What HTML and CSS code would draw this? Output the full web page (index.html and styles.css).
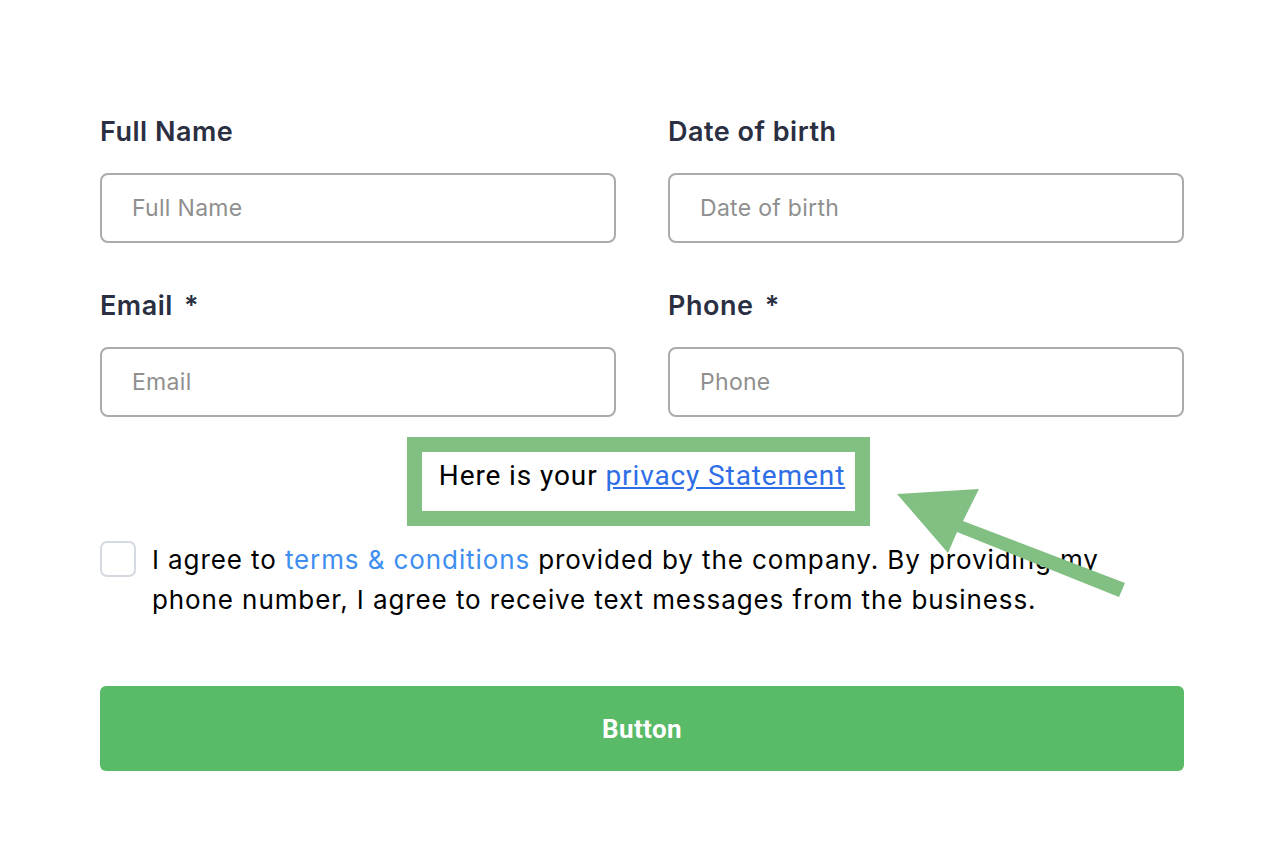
FILE: index.html
```html
<!DOCTYPE html>
<html lang="en">
<head>
  <meta charset="UTF-8">
  <meta name="viewport" content="width=device-width, initial-scale=1.0">
  <title>Contact Form</title>
  <link rel="stylesheet" href="styles.css">
</head>
<body>
  <div class="container">
    <form class="form" onsubmit="return false">
      <div class="grid">
        <div class="field">
          <label for="full-name">Full Name</label>
          <input type="text" id="full-name" placeholder="Full Name">
        </div>
        <div class="field">
          <label for="dob">Date of birth</label>
          <input type="text" id="dob" placeholder="Date of birth">
        </div>
        <div class="field">
          <label for="email">Email <span class="req">*</span></label>
          <input type="email" id="email" placeholder="Email">
        </div>
        <div class="field">
          <label for="phone">Phone <span class="req">*</span></label>
          <input type="tel" id="phone" placeholder="Phone">
        </div>
      </div>

      <!-- Privacy statement -->
      <div class="privacy-wrap">
        <div class="privacy">Here is your <a href="#">privacy Statement</a></div>
      </div>

      <!-- Terms -->
      <div class="agree">
        <span class="checkbox"></span>
        <p>I agree to <a href="#">terms &amp; conditions</a> provided by the company. By providing my phone number, I agree to receive text messages from the business.</p>
      </div>

      <button type="submit" class="submit">Button</button>
    </form>

    <svg class="arrow" width="1282" height="864" viewBox="0 0 1282 864">
      <polygon points="897,494 979,489 963,521 1125,583 1119,597 957,532 948,553" fill="#82bf82"/>
    </svg>
  </div>
</body>
</html>
```

FILE: styles.css
```css
body {
  margin: 0;
  font-family: Inter, "Noto Sans", sans-serif;
  background: #fff;
}
.container {
  position: relative;
  width: 1084px;
  padding: 116px 98px 0 100px;
}
.grid {
  display: grid;
  grid-template-columns: 516px 516px;
  column-gap: 52px;
}
.field {
  display: flex;
  flex-direction: column;
  margin-bottom: 47px;
}
.field:nth-child(n+3) {
  margin-bottom: 20px;
}
label {
  font-size: 27px;
  line-height: 32px;
  font-weight: 600;
  letter-spacing: 0.5px;
  color: #2b2f42;
  margin-bottom: 25px;
}
.req {
  margin-left: 4px;
}
input {
  box-sizing: border-box;
  height: 70px;
  width: 100%;
  border: 2px solid #ababab;
  border-radius: 8px;
  padding: 0 30px;
  font-family: Inter, sans-serif;
  font-size: 23px;
  letter-spacing: 0.3px;
  color: #333;
  outline: none;
}
input::placeholder {
  color: #8f8f8f;
}
.privacy-wrap {
  display: flex;
  justify-content: center;
  padding-right: 7px;
}
.privacy {
  border: 15px solid #82bf82;
  padding: 4px 10px 15px 17px;
  font-family: Roboto, sans-serif;
  font-size: 28px;
  line-height: 40px;
  letter-spacing: 0.9px;
  color: #000;
}
.privacy a {
  color: #2f6ee6;
}
.agree {
  display: flex;
  align-items: flex-start;
  margin-top: 14px;
}
.checkbox {
  flex: none;
  box-sizing: border-box;
  width: 36px;
  height: 36px;
  margin-top: 1px;
  border: 2px solid #d5d9e0;
  border-radius: 7px;
  margin-right: 16px;
}
.agree p {
  margin: 0;
  font-size: 26px;
  line-height: 40px;
  letter-spacing: 0.9px;
  color: #000;
}
.agree a {
  color: #3e8ef0;
  text-decoration: none;
}
.submit {
  display: block;
  width: 100%;
  height: 85px;
  margin-top: 66px;
  border: none;
  border-radius: 6px;
  background: #59ba68;
  color: #fff;
  font-family: Roboto, sans-serif;
  font-weight: 700;
  font-size: 26px;
  letter-spacing: 0.4px;
}
.arrow {
  position: absolute;
  left: 0;
  top: 0;
  pointer-events: none;
}
```
